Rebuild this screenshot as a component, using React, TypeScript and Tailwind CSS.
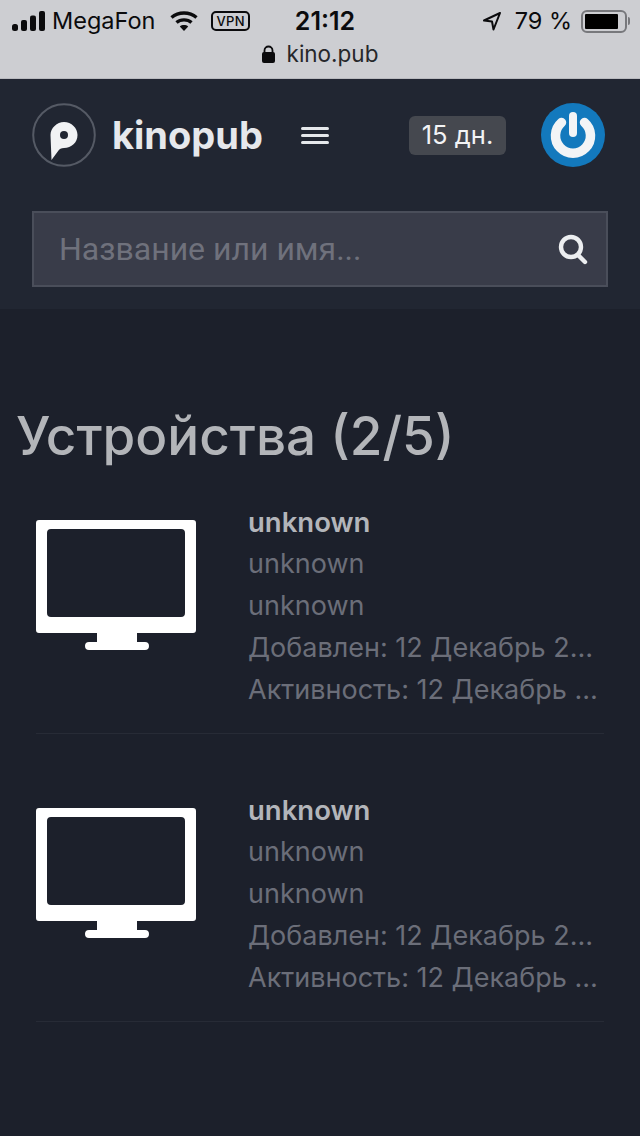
const devices = [0, 1];

function Signal() {
  return (
    <svg width="33" height="20" viewBox="0 0 33 20" fill="#0b0b0d">
      <rect x="0" y="13" width="6" height="7" rx="2.5" />
      <rect x="9" y="9" width="6" height="11" rx="2" />
      <rect x="18" y="4.5" width="6" height="15.5" rx="2" />
      <rect x="27" y="0" width="6" height="20" rx="2" />
    </svg>
  );
}

function Wifi() {
  return (
    <svg width="28" height="20" viewBox="0 0 28 20" fill="none" stroke="#0b0b0d" strokeWidth="3.4">
      <path d="M1.5 6.5C8.5 0.5 19.5 0.5 26.5 6.5" />
      <path d="M6.5 11.5C10.5 8 17.5 8 21.5 11.5" />
      <path d="M14 20L9.8 15.4C12 13.6 16 13.6 18.2 15.4Z" fill="#0b0b0d" stroke="none" />
    </svg>
  );
}

function Logo() {
  return (
    <svg width="64" height="64" viewBox="0 0 64 64">
      <circle cx="32" cy="32" r="30.8" fill="none" stroke="#555a65" strokeWidth="2" />
      <path
        d="M19.5 57L18.5 32C18.5 25 25 19 32 19C39.5 19 45.5 25 45.5 32C45.5 39.5 39.5 45 32 45C29 45 27.5 46 26.5 47.5Z"
        fill="#f1f2f4"
      />
      <circle cx="32" cy="32" r="4" fill="#212632" />
    </svg>
  );
}

function PowerBadge() {
  return (
    <svg width="64" height="64" viewBox="0 0 64 64">
      <circle cx="32" cy="32" r="32" fill="#1379bd" />
      <path d="M20.5 19.5A17.5 17.5 0 1 0 43.5 19.5" fill="none" stroke="#f2f4f6" strokeWidth="9.5" strokeLinecap="round" />
      <path d="M32 13V30" fill="none" stroke="#f2f4f6" strokeWidth="8" strokeLinecap="round" />
    </svg>
  );
}

function Monitor() {
  return (
    <svg width="160" height="130" viewBox="0 0 160 130" className="shrink-0">
      <path
        fillRule="evenodd"
        fill="#ffffff"
        d="M3 0H157A3 3 0 0 1 160 3V110A3 3 0 0 1 157 113H101V122H109A4 4 0 0 1 109 130H53A4 4 0 0 1 53 122H61V113H3A3 3 0 0 1 0 110V3A3 3 0 0 1 3 0ZM15 9A4 4 0 0 0 11 13V93A4 4 0 0 0 15 97H145A4 4 0 0 0 149 93V13A4 4 0 0 0 145 9Z"
      />
    </svg>
  );
}

export default function App() {
  return (
    <div className="w-[640px] h-[1136px] overflow-hidden bg-[#1c202b] font-['Inter',sans-serif]">
      {/* iOS status + address bar */}
      <div className="h-[79px] bg-[#cdced2] text-[#0b0b0d] border-b border-[#b9babf]">
        <div className="flex items-center h-[42px] pl-3 pr-[10px] text-[23.5px] leading-none">
          <Signal />
          <span className="ml-[7px]">MegaFon</span>
          <span className="ml-[15px]">
            <Wifi />
          </span>
          <span className="ml-[13px] border-2 border-[#0b0b0d] rounded-[5px] text-[13px] font-medium px-[3px] h-[20px] leading-[16px] tracking-wide">
            VPN
          </span>
          <span className="ml-[45px] text-[25px] font-semibold">21:12</span>
          <svg className="ml-auto" width="20" height="20" viewBox="0 0 20 20" fill="none" stroke="#0b0b0d" strokeWidth="2">
            <path d="M18 2L2 9.5L10 10.5L11.5 18.5Z" strokeLinejoin="round" />
          </svg>
          <span className="ml-[13px]">79 %</span>
          <span className="ml-[9px] flex items-center">
            <span className="flex items-center w-[46px] h-[23px] border-2 border-[#77787c] rounded-[6px] p-[2px]">
              <span className="block w-[33px] h-[15px] bg-black rounded-[1px]" />
            </span>
            <span className="block w-[2px] h-[8px] ml-[1px] bg-[#77787c] rounded-r" />
          </span>
        </div>
        <div className="flex items-center justify-center gap-[12px] h-[24px] text-[22.5px] leading-none text-[#26272a]">
          <svg width="13" height="18" viewBox="0 0 13 18" fill="#0b0b0d">
            <path d="M2.5 8V5.5A4 4 0 0 1 10.5 5.5V8" fill="none" stroke="#0b0b0d" strokeWidth="1.8" />
            <rect x="0" y="7" width="13" height="11" rx="2" />
          </svg>
          <span>kino.pub</span>
        </div>
      </div>

      {/* Header */}
      <div className="h-[230px] bg-[#212632] px-8 pt-6">
        <div className="flex items-center h-16">
          <Logo />
          <span className="ml-4 text-[38px] font-bold leading-none text-[#e6e8ec]">kinopub</span>
          <span className="ml-[38px] flex flex-col gap-[4px] w-[28px]">
            <span className="block h-[3px] bg-[#e6e8ec] rounded" />
            <span className="block h-[3px] bg-[#e6e8ec] rounded" />
            <span className="block h-[3px] bg-[#e6e8ec] rounded" />
          </span>
          <span className="ml-auto mr-[35px] flex items-center justify-center w-[97px] h-[39px] rounded-[6px] bg-[#45484f] text-[25.5px] text-[#f2f3f5]">
            15 дн.
          </span>
          <span className="mr-[3px]">
            <PowerBadge />
          </span>
        </div>
        <div className="mt-[44px] flex items-center justify-between h-[76px] border-2 border-[#4a4e5a] bg-[#393c49] pl-[25px] pr-[18px]">
          <span className="font-['Roboto',sans-serif] text-[32px] text-[#6f717c]">Название или имя...</span>
          <svg width="30" height="32" viewBox="0 0 30 32" fill="none" stroke="#eceef0" strokeWidth="4.4" strokeLinecap="round">
            <circle cx="13" cy="14" r="10" />
            <path d="M20 22L27 29" />
          </svg>
        </div>
      </div>

      {/* Devices */}
      <h1 className="mt-[92px] ml-[16px] text-[53px] leading-[70px] font-medium text-[#b3b5b9]">Устройства (2/5)</h1>
      <div className="mt-[49px] px-9">
        {devices.map((d) => (
          <div key={d} className="flex h-[288px] items-start">
            <div className="flex w-full h-[214px] border-b border-[#272b36]">
              <Monitor />
              <div className="ml-[52px] min-w-0 flex-1 -mt-[19px] text-[27px] leading-[42px] text-[#6b6e79]">
                <div className="font-semibold text-[27.5px] text-[#b3b5ba]">unknown</div>
                <div>unknown</div>
                <div>unknown</div>
                <div className="truncate">Добавлен: 12 Декабрь 2018</div>
                <div className="truncate">Активность: 12 Декабрь 2018</div>
              </div>
            </div>
          </div>
        ))}
      </div>
    </div>
  );
}
